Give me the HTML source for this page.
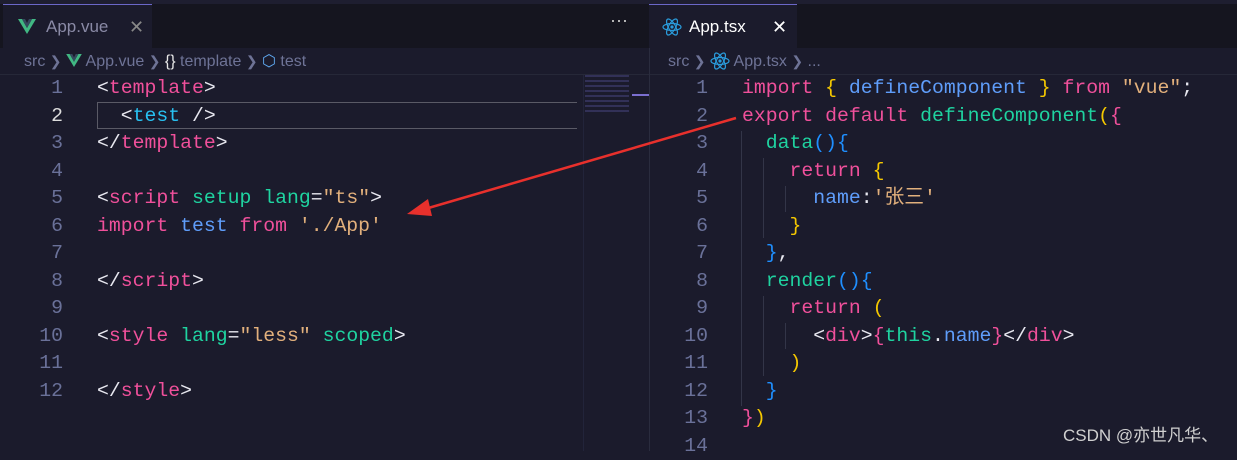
<!DOCTYPE html>
<html><head><meta charset="utf-8"><style>
*{margin:0;padding:0;box-sizing:border-box}
html,body{width:1237px;height:451px}
body{background:#1b1b2c;overflow:hidden;position:relative;font-family:"Liberation Sans","Noto Sans CJK SC",sans-serif}
.tabbar{position:absolute;top:0;height:48px;background:#15151f}
.tab{position:absolute;top:4px;height:44px;background:#1b1b2c;border-top:1px solid #6b67c8;color:#8a8aa6;font-size:17px;line-height:44px}
.crumb{position:absolute;top:48px;height:27px;border-bottom:1px solid #262838;color:#6e7396;font-size:16px;line-height:27px}
.code{position:absolute;font-family:"Liberation Mono","Noto Sans CJK SC",monospace;font-size:19.8px;line-height:27.5px;white-space:pre;color:#e8e8f0}
.ln{position:absolute;font-family:"Liberation Mono",monospace;font-size:19.8px;line-height:27.5px;color:#6a7199;text-align:right;white-space:pre}
.p{color:#f0509b}.t{color:#1fd3a0}.b{color:#5f9dfa}.c{color:#28c0f0}.s{color:#e2b07c}.y{color:#f5c800}.bl{color:#1f8fff}.w{color:#e8e8f0}
</style></head><body>
<div class="tabbar" style="left:0;width:1237px"></div>
<div style="position:absolute;left:0;top:0;width:1237px;height:4px;background:#1e1e30"></div>
<div class="tab" style="left:3px;width:149px">
 <svg style="position:absolute;left:15px;top:14px" width="18" height="15" viewBox="0 0 18 15"><path d="M0 0h4l5 9 5-9h4L9 15z" fill="#41b883"/><path d="M4 0h3l2 4 2-4h3L9 9z" fill="#35495e"/></svg>
 <span style="position:absolute;left:43px">App.vue</span>
 <span style="position:absolute;left:126px;color:#888;font-size:18px">✕</span>
</div>
<div style="position:absolute;left:610px;top:10px;color:#ccc;font-size:18px">···</div>
<div class="tab" style="left:649px;width:148px;color:#fff">
 <svg style="position:absolute;left:13px;top:13px" width="20" height="18" viewBox="-10 -9 20 18"><g fill="none" stroke="#2a9cdc" stroke-width="1.2"><ellipse rx="9" ry="3.5"/><ellipse rx="9" ry="3.5" transform="rotate(60)"/><ellipse rx="9" ry="3.5" transform="rotate(120)"/></g><circle r="1.6" fill="#2a9cdc"/></svg>
 <span style="position:absolute;left:40px">App.tsx</span>
 <span style="position:absolute;left:123px;font-size:18px">✕</span>
</div>
<div style="position:absolute;left:649px;top:48px;width:1px;height:403px;background:#2a2c3e"></div>
<div class="crumb" style="left:0;width:649px;padding-left:24px">src <span style="font-size:14px">❯</span> <svg width="16" height="13" viewBox="0 0 18 15" style="vertical-align:-1px"><path d="M0 0h4l5 9 5-9h4L9 15z" fill="#41b883"/><path d="M4 0h3l2 4 2-4h3L9 9z" fill="#35495e"/></svg> App.vue <span style="font-size:14px">❯</span> <span style="color:#e8e8e8">{}</span> template <span style="font-size:14px">❯</span> <span style="color:#5fa8f0">⬡</span> test</div>
<div class="crumb" style="left:650px;width:587px;padding-left:18px">src <span style="font-size:14px">❯</span> <svg width="20" height="18" viewBox="-10 -9 20 18" style="vertical-align:-4px"><g fill="none" stroke="#2a9cdc" stroke-width="1.2"><ellipse rx="9" ry="3.5"/><ellipse rx="9" ry="3.5" transform="rotate(60)"/><ellipse rx="9" ry="3.5" transform="rotate(120)"/></g><circle r="1.6" fill="#2a9cdc"/></svg> App.tsx <span style="font-size:14px">❯</span> ...</div>
<div style="position:absolute;left:97px;top:102px;width:480px;height:27px;border:1px solid #5a5a66;border-right:none"></div>
<div style="position:absolute;left:583px;top:75px;width:1px;height:376px;background:#22243a"></div>
<div style="position:absolute;left:585px;top:75px;width:44px;height:38px;background:repeating-linear-gradient(#3c3a6a 0 2px,transparent 2px 5px);opacity:.7"></div>
<div style="position:absolute;left:632px;top:94px;width:17px;height:2px;background:#7b6fd0"></div>
<div class="ln" style="left:20px;top:75px;width:43px">1
<span style="color:#ddd">2</span>
3
4
5
6
7
8
9
10
11
12</div>
<div class="code" style="left:97px;top:75px">&lt;<span class="p">template</span>&gt;
  &lt;<span class="c">test</span> /&gt;
&lt;/<span class="p">template</span>&gt;

&lt;<span class="p">script</span> <span class="t">setup</span> <span class="t">lang</span>=<span class="s">"ts"</span>&gt;
<span class="p">import</span> <span class="b">test</span> <span class="p">from</span> <span class="s">'./App'</span>

&lt;/<span class="p">script</span>&gt;

&lt;<span class="p">style</span> <span class="t">lang</span>=<span class="s">"less"</span> <span class="t">scoped</span>&gt;

&lt;/<span class="p">style</span>&gt;</div>
<div class="ln" style="left:665px;top:75px;width:43px">1
2
3
4
5
6
7
8
9
10
11
12
13
14</div>
<div style="position:absolute;left:741px;top:131px;width:1px;height:275px;background:#333548"></div>
<div style="position:absolute;left:763px;top:158px;width:1px;height:80px;background:#333548"></div>
<div style="position:absolute;left:785px;top:186px;width:1px;height:26px;background:#333548"></div>
<div style="position:absolute;left:763px;top:296px;width:1px;height:80px;background:#333548"></div>
<div style="position:absolute;left:785px;top:323px;width:1px;height:26px;background:#333548"></div>
<div class="code" style="left:742px;top:75px"><span class="p">import</span> <span class="y">{</span> <span class="b">defineComponent</span> <span class="y">}</span> <span class="p">from</span> <span class="s">"vue"</span>;
<span class="p">export</span> <span class="p">default</span> <span class="t">defineComponent</span><span class="y">(</span><span class="p">{</span>
  <span class="t">data</span><span class="bl">(){</span>
    <span class="p">return</span> <span class="y">{</span>
      <span class="b">name</span>:<span class="s">'张三'</span>
    <span class="y">}</span>
  <span class="bl">}</span>,
  <span class="t">render</span><span class="bl">(){</span>
    <span class="p">return</span> <span class="y">(</span>
      &lt;<span class="p">div</span>&gt;<span class="p">{</span><span class="t">this</span>.<span class="b">name</span><span class="p">}</span>&lt;/<span class="p">div</span>&gt;
    <span class="y">)</span>
  <span class="bl">}</span>
<span class="p">}</span><span class="y">)</span></div>
<div style="position:absolute;left:1063px;top:421px;color:#d0d0d0;font-size:17px;font-family:'Liberation Sans','Noto Sans CJK SC',sans-serif">CSDN @亦世凡华、</div>
<svg style="position:absolute;left:0;top:0" width="1237" height="451"><line x1="736" y1="118" x2="425" y2="209" stroke="#e8302c" stroke-width="2.5"/><path d="M407 214 L428 199 L432 216 Z" fill="#e8302c"/></svg>
</body></html>
